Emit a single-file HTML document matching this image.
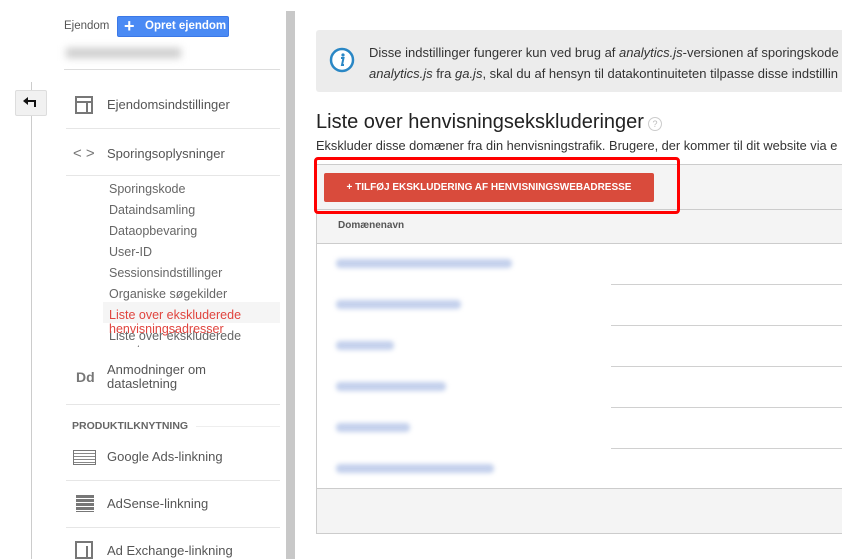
<!DOCTYPE html>
<html><head><meta charset="utf-8"><style>
*{margin:0;padding:0;box-sizing:border-box}
body{width:842px;height:559px;overflow:hidden;background:#fff;font-family:"Liberation Sans",Arial,sans-serif;position:relative;color:#444}
.a{position:absolute}
.nav{font-size:13px;color:#555}
.sub{font-size:12.5px;color:#666;left:109px}
.sep{height:1px;background:#e6e6e6;left:66px;width:214px}
.blur{position:absolute;height:9px;background:#c3d0ec;border-radius:4px;filter:blur(2.5px);left:336px}
.rl{position:absolute;left:611px;right:0;height:1px;background:#d0d0d0}
</style></head><body>
<div class="a" style="left:31px;top:82px;width:1px;height:477px;background:#ccc"></div>
<div class="a" style="left:15px;top:90px;width:32px;height:26px;background:#f1f1f1;border:1px solid #ddd;border-radius:2px"></div>
<svg class="a" style="left:22px;top:96px" width="18" height="12"><path d="M6 1 L1 5 L6 9 Z" fill="#111"/><path d="M5 4 H14 V11 H12 V6 H5 Z" fill="#111"/></svg>
<div class="a" style="left:64px;top:20px;font-size:11.5px;color:#555">Ejendom</div>
<div class="a" style="left:117px;top:16px;width:112px;height:21px;background:#4a8af4;border:1px solid #3b78e7;border-radius:2px;color:#fff;font-size:11.5px;font-weight:bold;line-height:19px;padding-left:27px;white-space:nowrap">Opret ejendom</div>
<div class="a" style="left:124px;top:20px;color:#fff;font-size:18px;line-height:13px;font-weight:bold">+</div>
<div class="a" style="left:66px;top:48px;width:115px;height:10px;background:#ccc;filter:blur(4px)"></div>
<div class="a" style="left:64px;top:69px;width:216px;height:1px;background:#ddd"></div>
<div class="a" style="left:75px;top:96px;width:18px;height:18px;border:2px solid #777"></div>
<div class="a" style="left:75px;top:101px;width:18px;height:2px;background:#777"></div>
<div class="a" style="left:86px;top:101px;width:2px;height:12px;background:#777"></div>
<div class="a nav" style="left:107px;top:97px">Ejendomsindstillinger</div>
<div class="a sep" style="top:128px"></div>
<div class="a" style="left:73px;top:145px;font-size:15px;color:#777">&lt; &gt;</div>
<div class="a nav" style="left:107px;top:146px">Sporingsoplysninger</div>
<div class="a sep" style="top:175px"></div>
<div class="a sub" style="top:182px">Sporingskode</div>
<div class="a sub" style="top:203px">Dataindsamling</div>
<div class="a sub" style="top:224px">Dataopbevaring</div>
<div class="a sub" style="top:245px">User-ID</div>
<div class="a sub" style="top:266px">Sessionsindstillinger</div>
<div class="a sub" style="top:287px">Organiske søgekilder</div>
<div class="a" style="left:103px;top:302px;width:177px;height:21px;background:#f5f5f5"></div>
<div class="a sub" style="top:329px;height:18px;overflow:hidden;line-height:14px">Liste over ekskluderede<br>søgetermer</div>
<div class="a sub" style="top:308px;color:#e0443e;line-height:14px">Liste over ekskluderede<br>henvisningsadresser</div>
<div class="a" style="left:76px;top:369px;font-size:14px;font-weight:bold;color:#777">Dd</div>
<div class="a nav" style="left:107px;top:363px;line-height:14px">Anmodninger om<br>datasletning</div>
<div class="a sep" style="top:404px"></div>
<div class="a" style="left:72px;top:420px;font-size:10.5px;font-weight:bold;color:#666">PRODUKTILKNYTNING</div>
<div class="a" style="left:196px;top:426px;width:84px;height:1px;background:#eee"></div>
<div class="a" style="left:73px;top:450px;width:23px;height:15px;border:1px solid #777;background:repeating-linear-gradient(#fff 0 2px,#888 2px 3px)"></div>
<div class="a nav" style="left:107px;top:449px">Google Ads-linkning</div>
<div class="a sep" style="top:480px"></div>
<div class="a" style="left:76px;top:495px;width:18px;height:17px;background:repeating-linear-gradient(#777 0 3px,#fff 3px 4px)"></div>
<div class="a nav" style="left:107px;top:496px">AdSense-linkning</div>
<div class="a sep" style="top:527px"></div>
<div class="a" style="left:75px;top:541px;width:18px;height:18px;border:2px solid #777"></div>
<div class="a" style="left:86px;top:546px;width:2px;height:13px;background:#777"></div>
<div class="a nav" style="left:107px;top:543px">Ad Exchange-linkning</div>
<div class="a" style="left:286px;top:11px;width:9px;height:548px;background:#c8c8c8"></div>
<div class="a" style="left:316px;top:30px;width:540px;height:62px;background:#ececec;border-radius:3px"></div>
<svg class="a" style="left:329px;top:47px" width="26" height="26"><circle cx="13" cy="13" r="11" fill="#fff" stroke="#2a87c5" stroke-width="2.5"/><circle cx="14" cy="8" r="1.6" fill="#2a87c5"/><path d="M12 11 H14.5 L13 18 H15" stroke="#2a87c5" stroke-width="2" fill="none"/></svg>
<div class="a" style="left:369px;top:42px;font-size:13px;color:#333;line-height:21px;white-space:nowrap">Disse indstillinger fungerer kun ved brug af <i>analytics.js</i>-versionen af sporingskode<br><i>analytics.js</i> fra <i>ga.js</i>, skal du af hensyn til datakontinuiteten tilpasse disse indstillin</div>
<div class="a" style="left:316px;top:111px;font-size:20px;color:#222">Liste over henvisningsekskluderinger</div>
<div class="a" style="left:648px;top:117px;width:14px;height:14px;border:1px solid #ccc;border-radius:50%;font-size:9px;color:#bbb;text-align:center;line-height:12px">?</div>
<div class="a" style="left:316px;top:138px;font-size:12.8px;color:#333;white-space:nowrap">Ekskluder disse domæner fra din henvisningstrafik. Brugere, der kommer til dit website via e</div>
<div class="a" style="left:316px;top:164px;width:540px;height:370px;border:1px solid #ccc;background:#f4f4f4"></div>
<div class="a" style="left:317px;top:209px;width:540px;height:1px;background:#ccc"></div>
<div class="a" style="left:338px;top:220px;font-size:10px;font-weight:bold;color:#555">Domænenavn</div>
<div class="a" style="left:317px;top:243px;width:540px;height:246px;background:#fff;border-top:1px solid #ccc;border-bottom:1px solid #ccc"></div>
<div class="rl" style="top:284px"></div><div class="rl" style="top:325px"></div><div class="rl" style="top:366px"></div><div class="rl" style="top:407px"></div><div class="rl" style="top:448px"></div>
<div class="blur" style="top:259px;width:176px"></div>
<div class="blur" style="top:300px;width:125px"></div>
<div class="blur" style="top:341px;width:58px"></div>
<div class="blur" style="top:382px;width:110px"></div>
<div class="blur" style="top:423px;width:74px"></div>
<div class="blur" style="top:464px;width:158px"></div>
<div class="a" style="left:324px;top:173px;width:330px;height:29px;background:#d94b3c;border-radius:2px;color:#fff;font-size:10px;font-weight:bold;text-align:center;line-height:29px">+ TILFØJ EKSKLUDERING AF HENVISNINGSWEBADRESSE</div>
<div class="a" style="left:314px;top:157px;width:366px;height:57px;border:3px solid #f00;border-radius:4px"></div>
</body></html>
